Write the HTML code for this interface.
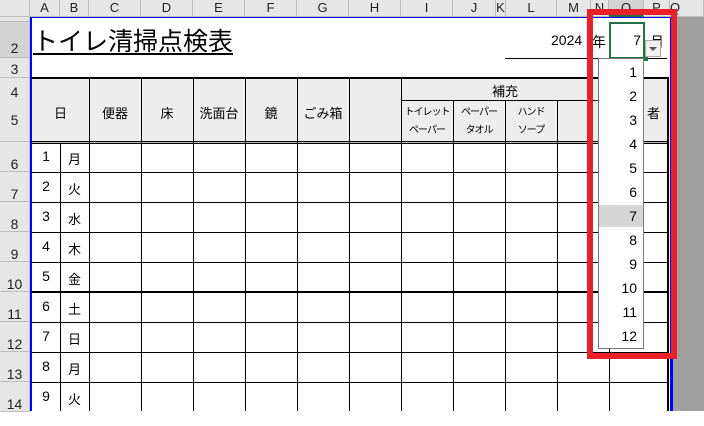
<!DOCTYPE html>
<html><head><meta charset="utf-8"><style>
*{margin:0;padding:0;box-sizing:border-box}
body{width:704px;height:411px;overflow:hidden;background:#fff;position:relative;font-family:"Liberation Sans","Noto Sans CJK JP",sans-serif;color:#000}
.a{position:absolute}
.ch{position:absolute;top:0;height:17px;background:#e6e6e6;border-right:1px solid #bdbdbd;border-bottom:1px solid #bdbdbd;font-size:13px;text-align:center;line-height:16px;color:#222}
.rh{position:absolute;left:0;width:30px;background:#e6e6e6;border-bottom:1px solid #bdbdbd;border-right:1px solid #bdbdbd;font-size:14px;text-align:center;color:#222}
.v{position:absolute;width:1px;background:#000}
.h{position:absolute;height:1px;background:#000}
.t{position:absolute;font-size:13px;text-align:center}
.sm{font-size:10px;line-height:18px;white-space:nowrap;letter-spacing:-1px}
.dd{position:absolute;right:6px;font-size:14px}
</style></head><body>
<div class="ch" style="left:0;width:30px"></div>
<div class="ch" style="left:30px;width:30px">A</div>
<div class="ch" style="left:60px;width:29px">B</div>
<div class="ch" style="left:89px;width:52px">C</div>
<div class="ch" style="left:141px;width:52px">D</div>
<div class="ch" style="left:193px;width:52px">E</div>
<div class="ch" style="left:245px;width:52px">F</div>
<div class="ch" style="left:297px;width:52px">G</div>
<div class="ch" style="left:349px;width:52px">H</div>
<div class="ch" style="left:401px;width:52px">I</div>
<div class="ch" style="left:453px;width:43px">J</div>
<div class="ch" style="left:496px;width:10px">K</div>
<div class="ch" style="left:506px;width:51px">L</div>
<div class="ch" style="left:557px;width:34px">M</div>
<div class="ch" style="left:591px;width:18px">N</div>
<div class="ch" style="left:609px;width:35px;background:#d2d2d2;border-bottom:2px solid #217346">O</div>
<div class="ch" style="left:644px;width:26px">P</div>
<div class="ch" style="left:670px;width:34px;text-align:left">Q</div>
<div class="a" style="left:673px;top:17px;width:31px;height:394px;background:#a0a0a0"></div>
<div class="a" style="left:0;top:17px;width:2px;height:394px;background:#217346"></div>
<div class="rh" style="top:17px;height:5px"></div>
<div class="rh" style="top:22px;height:36px;background:#d2d2d2;line-height:52px">2</div>
<div class="rh" style="top:58px;height:20px;line-height:22px">3</div>
<div class="rh" style="top:78px;height:64px;line-height:28px">4<br>5</div>
<div class="rh" style="top:142px;height:30px;line-height:44px">6</div>
<div class="rh" style="top:172px;height:30px;line-height:44px">7</div>
<div class="rh" style="top:202px;height:30px;line-height:44px">8</div>
<div class="rh" style="top:232px;height:30px;line-height:44px">9</div>
<div class="rh" style="top:262px;height:30px;line-height:44px">10</div>
<div class="rh" style="top:292px;height:30px;line-height:44px">11</div>
<div class="rh" style="top:322px;height:30px;line-height:44px">12</div>
<div class="rh" style="top:352px;height:30px;line-height:44px">13</div>
<div class="rh" style="top:382px;height:30px;line-height:44px">14</div>
<div class="a" style="left:30px;top:17px;width:2px;height:394px;background:#00f"></div>
<div class="a" style="left:30px;top:17px;width:642px;height:1px;background:#00f"></div>
<div class="a" style="left:670px;top:17px;width:3px;height:394px;background:#00f"></div>
<div class="a" style="left:33px;top:24px;font-size:25px;text-decoration:underline;text-underline-offset:3px;line-height:36px">トイレ清掃点検表</div>
<div class="a" style="left:551px;top:32px;font-size:14px">2024</div>
<div class="a" style="left:592px;top:32px;font-size:14px">年</div>
<div class="h" style="left:505px;top:58px;width:162px"></div>
<div class="a" style="left:32px;top:79px;width:635px;height:63px;background:#ededed"></div>
<div class="a" style="left:32px;top:77px;width:637px;height:2px;background:#000"></div>
<div class="a" style="left:32px;top:141px;width:637px;height:3px;border-top:1px solid #000;border-bottom:1px solid #000;background:#bbb"></div>
<div class="a" style="left:667px;top:77px;width:2px;height:334px;background:#000"></div>
<div class="v" style="left:89px;top:79px;height:332px"></div>
<div class="v" style="left:60px;top:144px;height:267px"></div>
<div class="v" style="left:141px;top:79px;height:332px"></div>
<div class="v" style="left:193px;top:79px;height:332px"></div>
<div class="v" style="left:245px;top:79px;height:332px"></div>
<div class="v" style="left:297px;top:79px;height:332px"></div>
<div class="v" style="left:349px;top:79px;height:332px"></div>
<div class="v" style="left:401px;top:79px;height:332px"></div>
<div class="v" style="left:453px;top:100px;height:311px"></div>
<div class="v" style="left:505px;top:100px;height:311px"></div>
<div class="v" style="left:557px;top:100px;height:311px"></div>
<div class="v" style="left:609px;top:79px;height:332px"></div>
<div class="h" style="left:401px;top:100px;width:208px"></div>
<div class="t" style="left:32px;top:103px;width:57px">日</div>
<div class="t" style="left:89px;top:103px;width:52px">便器</div>
<div class="t" style="left:141px;top:103px;width:52px">床</div>
<div class="t" style="left:193px;top:103px;width:52px">洗面台</div>
<div class="t" style="left:245px;top:103px;width:52px">鏡</div>
<div class="t" style="left:297px;top:103px;width:52px">ごみ箱</div>
<div class="t" style="left:401px;top:81px;width:208px">補充</div>
<div class="t sm" style="left:401px;top:104px;width:52px">トイレット<br>ペーパー</div>
<div class="t sm" style="left:453px;top:104px;width:52px">ペーパー<br>タオル</div>
<div class="t sm" style="left:505px;top:104px;width:52px">ハンド<br>ソープ</div>
<div class="t" style="left:640px;top:103px;width:27px">者</div>
<div class="h" style="left:32px;top:172px;width:635px"></div>
<div class="h" style="left:32px;top:202px;width:635px"></div>
<div class="h" style="left:32px;top:232px;width:635px"></div>
<div class="h" style="left:32px;top:262px;width:635px"></div>
<div class="a" style="left:32px;top:291px;width:635px;height:2px;background:#000"></div>
<div class="h" style="left:32px;top:322px;width:635px"></div>
<div class="h" style="left:32px;top:352px;width:635px"></div>
<div class="h" style="left:32px;top:382px;width:635px"></div>
<div class="t" style="left:32px;top:148px;width:28px;font-size:14px">1</div><div class="t" style="left:60px;top:149px;width:29px">月</div>
<div class="t" style="left:32px;top:178px;width:28px;font-size:14px">2</div><div class="t" style="left:60px;top:179px;width:29px">火</div>
<div class="t" style="left:32px;top:208px;width:28px;font-size:14px">3</div><div class="t" style="left:60px;top:209px;width:29px">水</div>
<div class="t" style="left:32px;top:238px;width:28px;font-size:14px">4</div><div class="t" style="left:60px;top:239px;width:29px">木</div>
<div class="t" style="left:32px;top:268px;width:28px;font-size:14px">5</div><div class="t" style="left:60px;top:269px;width:29px">金</div>
<div class="t" style="left:32px;top:298px;width:28px;font-size:14px">6</div><div class="t" style="left:60px;top:299px;width:29px">土</div>
<div class="t" style="left:32px;top:328px;width:28px;font-size:14px">7</div><div class="t" style="left:60px;top:329px;width:29px">日</div>
<div class="t" style="left:32px;top:358px;width:28px;font-size:14px">8</div><div class="t" style="left:60px;top:359px;width:29px">月</div>
<div class="t" style="left:32px;top:388px;width:28px;font-size:14px">9</div><div class="t" style="left:60px;top:389px;width:29px">火</div>
<div class="a" style="left:609px;top:22px;width:36px;height:37px;border:2px solid #217346;background:#fff"></div>
<div class="a" style="left:609px;top:32px;width:32px;text-align:right;font-size:14px">7</div>
<div class="a" style="left:650px;top:32px;font-size:14px">月</div>
<div class="a" style="left:643px;top:56px;width:5px;height:5px;background:#217346"></div>
<div class="a" style="left:645px;top:40px;width:16px;height:17px;background:#f0f0f0;border:1px solid #aaa"></div>
<div class="a" style="left:649px;top:47px;width:0;height:0;border-left:4px solid transparent;border-right:4px solid transparent;border-top:4px solid #555"></div>
<div class="a" style="left:598px;top:58px;width:46px;height:291px;background:#fff;border:1px solid #777">
<div style="position:relative;font-size:14px">
<div class="dd" style="top:5px">1</div><div class="dd" style="top:29px">2</div><div class="dd" style="top:53px">3</div><div class="dd" style="top:77px">4</div><div class="dd" style="top:101px">5</div><div class="dd" style="top:125px">6</div>
<div style="position:absolute;left:0;top:146px;width:44px;height:22px;background:#d6d6d6"></div>
<div class="dd" style="top:149px">7</div><div class="dd" style="top:173px">8</div><div class="dd" style="top:197px">9</div><div class="dd" style="top:221px">10</div><div class="dd" style="top:245px">11</div><div class="dd" style="top:269px">12</div>
</div></div>
<div class="a" style="left:587px;top:9px;width:90px;height:350px;border:6px solid #e8202a"></div>
</body></html>
